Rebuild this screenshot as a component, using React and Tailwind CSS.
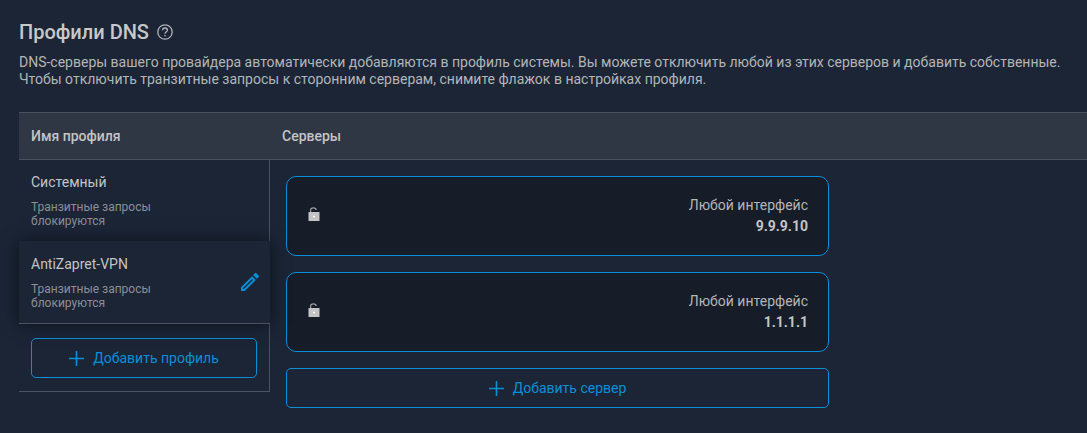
const PROFILES = [
  { name: 'Системный', active: false },
  { name: 'AntiZapret-VPN', active: true },
];

const SERVERS = ['9.9.9.10', '1.1.1.1'];

function PlusIcon() {
  return (
    <svg width="15" height="15" viewBox="0 0 15 15" stroke="#0a8fd8" strokeWidth="1.6" className="block">
      <path d="M7.5 0V15M0 7.5H15" />
    </svg>
  );
}

function LockIcon() {
  return (
    <svg width="12" height="14" viewBox="0 0 12 14" className="-mt-[4px] block">
      <path d="M2.6 5V3C2.6 1.7 3.8 0.8 5.4 0.8S8.2 1.7 8.2 3" fill="none" stroke="#9a9ca0" strokeWidth="1.2" />
      <rect x="0.5" y="5" width="11" height="9" fill="#c4c4c4" />
      <rect x="5.5" y="8.5" width="1" height="2" fill="#fff" />
      <rect x="5" y="9" width="2" height="1" fill="#fff" />
    </svg>
  );
}

function PencilIcon() {
  return (
    <svg width="24" height="24" viewBox="0 0 24 24" fill="#0a8fd8" className="block">
      <path d="M14.06 9.02l.92.92L5.92 19H5v-.92l9.06-9.06M17.66 3c-.25 0-.51.1-.7.29l-1.83 1.83 3.75 3.75 1.83-1.83c.39-.39.39-1.02 0-1.41l-2.34-2.34c-.2-.2-.45-.29-.71-.29zm-3.6 3.19L3 17.25V21h3.75L17.81 9.94l-3.75-3.75z" />
    </svg>
  );
}

function HelpIcon() {
  return (
    <svg width="16" height="16" viewBox="0 0 16 16" fill="none" className="block">
      <circle cx="8" cy="8" r="7.2" stroke="#b0b2b6" strokeWidth="1.3" />
      <path d="M5.6 6.3C5.6 5 6.7 4 8 4S10.4 5 10.4 6.2C10.4 7.7 8 7.8 8 9.8" stroke="#b0b2b6" strokeWidth="1.3" />
      <rect x="7.3" y="10.9" width="1.4" height="1.4" fill="#b0b2b6" />
    </svg>
  );
}

export default function App() {
  return (
    <div className="h-[433px] w-[1087px] overflow-hidden bg-[#1b2536] font-['Roboto',sans-serif] text-[#c4c4c4]">
      <div className="flex items-center gap-[8px] pl-[19px] pt-[20px]">
        <h1 className="text-[20px] leading-[24px] font-medium text-[#c8c8c8]">Профили DNS</h1>
        <HelpIcon />
      </div>

      <p className="mt-[10px] pl-[19px] text-[14px] leading-[17px] whitespace-nowrap text-[#b4b5b7]">
        DNS-серверы вашего провайдера автоматически добавляются в профиль системы. Вы можете отключить любой из этих серверов и добавить собственные.
        <br />
        Чтобы отключить транзитные запросы к сторонним серверам, снимите флажок в настройках профиля.
      </p>

      <div className="mt-[24px] ml-[19px]">
        <div className="flex h-[48px] items-center border-y border-[#4a5160] bg-[#2f3644] text-[14px] font-medium text-[#c4c4c4]">
          <div className="w-[263px] pl-[12px]">Имя профиля</div>
          <div>Серверы</div>
        </div>

        <div className="flex">
          <div className="w-[251px]">
            {PROFILES.map((p) =>
              p.active ? (
                <div
                  key={p.name}
                  className="relative flex h-[83px] w-[251px] items-center justify-between border-b border-[#4a5160] bg-[#1b2536] pr-[8px] pl-[12px] shadow-[0_0_16px_rgba(0,0,0,0.55)]"
                >
                  <ProfileText name={p.name} />
                  <PencilIcon />
                </div>
              ) : (
                <div key={p.name} className="flex h-[81px] items-center border-r border-[#4a5160] pl-[12px]">
                  <ProfileText name={p.name} />
                </div>
              ),
            )}
            <div className="h-[68px] border-r border-b border-[#4a5160] pt-[14px] pl-[12px]">
              <button className="flex h-[40px] w-[226px] items-center justify-center gap-[9px] rounded-[5px] border border-[#0a8fd8] text-[14px] text-[#0a8fd8]">
                <PlusIcon />
                Добавить профиль
              </button>
            </div>
          </div>

          <div className="flex w-[559px] flex-col gap-[16px] pt-[16px] pl-[16px]">
            {SERVERS.map((ip) => (
              <div
                key={ip}
                className="flex h-[80px] items-center justify-between rounded-[10px] border border-[#0a8fd8] bg-[#161c28] pr-[20px] pl-[21px]"
              >
                <LockIcon />
                <div className="text-right text-[14px] leading-[21px]">
                  <div className="text-[#b4b5b7]">Любой интерфейс</div>
                  <div className="font-bold text-[#c4c4c4]">{ip}</div>
                </div>
              </div>
            ))}
            <button className="flex h-[40px] items-center justify-center gap-[9px] rounded-[5px] border border-[#0a8fd8] text-[14px] text-[#0a8fd8]">
              <PlusIcon />
              Добавить сервер
            </button>
          </div>
        </div>
      </div>
    </div>
  );
}

function ProfileText({ name }) {
  return (
    <div>
      <div className="text-[14px] leading-[18px] text-[#c4c4c4]">{name}</div>
      <div className="mt-[9px] text-[12px] leading-[14px] text-[#8b8f96]">
        Транзитные запросы
        <br />
        блокируются
      </div>
    </div>
  );
}
